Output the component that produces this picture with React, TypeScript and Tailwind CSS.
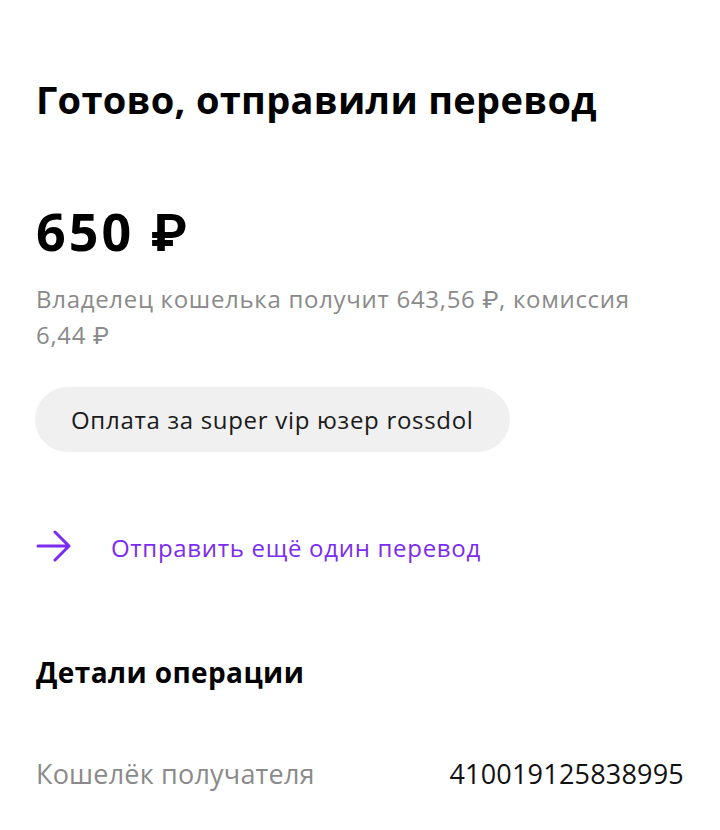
export default function App() {
    return (
        <main
            className="w-[720px] h-[830px] bg-white px-[36px] pt-[73px] text-black overflow-hidden"
            style={{ fontFamily: "'Open Sans', Roboto, sans-serif" }}
        >
            <h1 className="text-[38px] leading-[52px] font-bold tracking-[0.3px]">
                Готово, отправили перевод
            </h1>

            <p className="mt-[76px] text-[52px] leading-[60px] font-bold tracking-[3px]">
                650 ₽
            </p>

            <p className="mt-[20px] text-[24px] leading-[36px] text-[#8a8a8a] tracking-[0.7px]">
                Владелец кошелька получит 643,56 ₽, комиссия 6,44 ₽
            </p>

            <div className="mt-[34px] -ml-[1px] inline-flex h-[65px] items-center rounded-full bg-[#f0f0f0] pl-[36px] pr-[36px]">
                <span className="text-[24px] leading-[32px] tracking-[0.7px] text-[#1a1a1a]">
                    Оплата за super vip юзер rossdol
                </span>
            </div>

            {/* ACTION */}
            <div className="mt-[78px] flex items-center">
                <svg width="36" height="32" viewBox="0 0 36 32" fill="none" className="shrink-0">
                    <path
                        d="M2 16H33M19 2L33 16L19 30"
                        stroke="#7b2cf0"
                        strokeWidth="3"
                        strokeLinecap="round"
                        strokeLinejoin="round"
                    />
                </svg>
                <span className="ml-[39px] text-[24px] leading-[32px] tracking-[0.7px] text-[#7b2cf0] translate-y-[2px]">
                    Отправить ещё один перевод
                </span>
            </div>

            {/* DETAILS */}
            <h2 className="mt-[92px] text-[28px] leading-[36px] font-bold tracking-[0.4px]">
                Детали операции
            </h2>

            <div className="mt-[68px] flex items-center justify-between">
                <span className="text-[27px] leading-[32px] tracking-[0.2px] text-[#8a8a8a]">
                    Кошелёк получателя
                </span>
                <span className="text-[27px] leading-[32px] tracking-[0.2px] text-[#111]">
                    410019125838995
                </span>
            </div>
        </main>
    )
}
